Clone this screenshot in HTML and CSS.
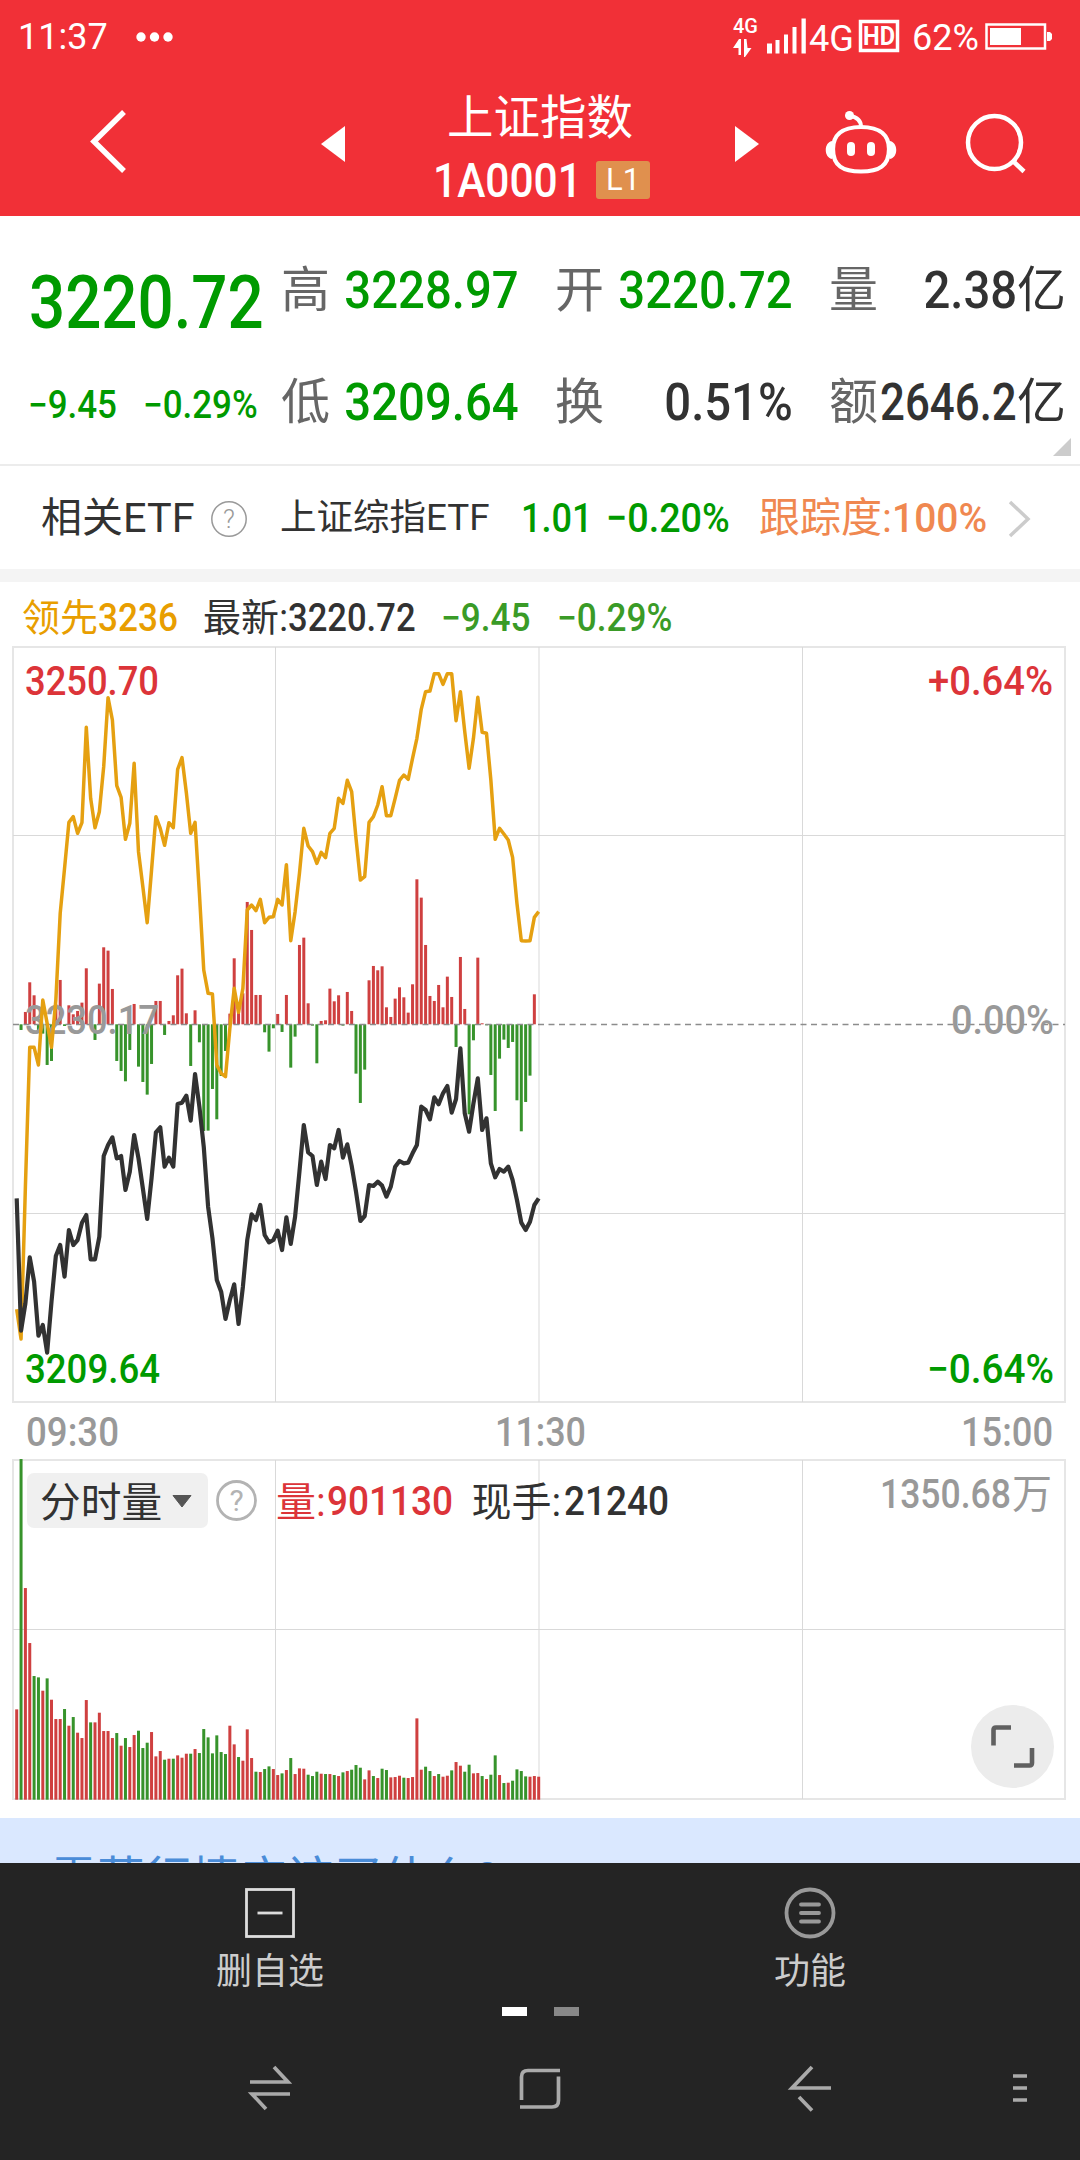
FILE: index.html
```html
<!DOCTYPE html>
<html lang="zh-CN">
<head>
<meta charset="utf-8">
<title>上证指数 1A0001</title>
<link rel="stylesheet" href="styles.css">
</head>
<body>
<div class="screen">
  <header class="top">
    <div class="status">
      <span class="clock">11:37</span>
      <svg class="dots" width="40" height="12" viewBox="0 0 40 12" fill="#fff"><circle cx="6" cy="6" r="4.7"/><circle cx="19.5" cy="6" r="4.7"/><circle cx="33" cy="6" r="4.7"/></svg>
      <svg class="signals" width="330" height="60" viewBox="730 10 330 60" fill="#fff">
        <text x="733" y="33" font-size="21" font-weight="500" textLength="25" lengthAdjust="spacingAndGlyphs">4G</text>
        <path d="M733 48l6-9h2v16h-2.500v-7zM744 39h2.500l1 9h4l-6.500 9h-1z"/>
        <path d="M767 43.500h5v10h-5zM775.500 40h4v13.500h-4zM784 34.500h4v19h-4zM792.500 27h4v26.500h-4zM801.500 18.500h4.300v35h-4.300z"/>
        <text x="809" y="51" font-size="36" textLength="45" lengthAdjust="spacingAndGlyphs">4G</text>
        <rect x="860.500" y="21.500" width="37" height="29" fill="none" stroke="#fff" stroke-width="3.500"/>
        <text x="863" y="45" font-size="25" font-weight="700" textLength="32" lengthAdjust="spacingAndGlyphs">HD</text>
        <text x="912" y="50" font-size="36" textLength="67" lengthAdjust="spacingAndGlyphs">62%</text>
        <rect x="986.500" y="24.500" width="58.500" height="24" fill="none" stroke="#fff" stroke-width="2.500"/>
        <path d="M990 28h31v17h-31zM1047 32h3l2 2v5l-2 2h-3z"/>
      </svg>
    </div>
    <div class="titlebar">
      <svg class="back" width="40" height="66" viewBox="0 0 40 66"><path d="M36 4L6 33.500 36 63" fill="none" stroke="#fff" stroke-width="5.500"/></svg>
      <svg class="prev" width="24" height="38" viewBox="0 0 24 38" fill="#fff"><path d="M0 19L24 1v36z"/></svg>
      <div class="name">
        <h1>上证指数</h1>
        <div class="code"><span class="num">1A0001</span><span class="level">L1</span></div>
      </div>
      <svg class="next" width="24" height="38" viewBox="0 0 24 38" fill="#fff"><path d="M24 19L0 1v36z"/></svg>
      <svg class="robot" width="72" height="66" viewBox="825 110 72 66">
        <path d="M861 127c20 0 28 9 28 22 0 17-10 22.500-28 22.500s-28-5.500-28-22.500c0-13 8-22 28-22z" fill="none" stroke="#fff" stroke-width="4.200"/>
        <path d="M832.500 141c-9 1-9 17 0 18zM889.500 141c9 1 9 17 0 18z" fill="#fff"/>
        <path d="M861 127c0-7-4-10-11-11" fill="none" stroke="#fff" stroke-width="4"/>
        <circle cx="849.500" cy="115.500" r="4.500" fill="#fff"/>
        <rect x="847" y="142" width="8" height="14" rx="4" fill="#fff"/><rect x="867" y="142" width="8" height="14" rx="4" fill="#fff"/>
      </svg>
      <svg class="search" width="64" height="64" viewBox="964 112 64 64" fill="none" stroke="#fff" stroke-width="4.500"><circle cx="994.500" cy="142.500" r="26.500"/><path d="M1013 161l11 10.500"/></svg>
    </div>
  </header>

  <section class="quote">
    <span class="big num down">3220.72</span>
    <div class="cell"><span class="label">高</span><span class="num down">3228.97</span></div>
    <div class="cell"><span class="label">开</span><span class="num down">3220.72</span></div>
    <div class="cell"><span class="label">量</span><span class="mixed"><span class="num">2.38</span><span class="unit">亿</span></span></div>
    <div class="change down"><span class="num c1">−9.45</span><span class="num c2">−0.29%</span></div>
    <div class="cell"><span class="label">低</span><span class="num down">3209.64</span></div>
    <div class="cell"><span class="label">换</span><span class="num">0.51%</span></div>
    <div class="cell"><span class="label">额</span><span class="mixed"><span class="num tight">2646.2</span><span class="unit">亿</span></span></div>
    <i class="corner"></i>
  </section>

  <section class="etf">
    <span class="etf-label">相关<span class="latin">ETF</span></span>
    <svg class="help" width="38" height="38" viewBox="0 0 38 38"><circle cx="19" cy="19" r="17.200" fill="none" stroke="#999" stroke-width="1.500"/><text x="19" y="28" font-size="26" fill="#999" text-anchor="middle" font-weight="300">?</text></svg>
    <span class="etf-name">上证综指<span class="latin">ETF</span></span>
    <span class="num down p">1.01</span>
    <span class="num down r">−0.20%</span>
    <span class="track">跟踪度:<span class="num">100%</span></span>
    <svg class="go" width="26" height="40" viewBox="0 0 26 40"><path d="M3 3l18 17L3 37" fill="none" stroke="#ccc" stroke-width="3.500"/></svg>
  </section>

  <section class="legend">
    <span class="lead">领先<span class="num">3236</span></span>
    <span class="last">最新:<span class="num">3220.72</span></span>
    <span class="num fall l1">−9.45</span>
    <span class="num fall">−0.29%</span>
  </section>

  <svg class="chart" id="chart" width="1080" height="1172" viewBox="0 646 1080 1172">
    <g id="grid" fill="none" stroke="#d9d9d9"></g>
    <g id="bars"></g>
    <path id="zero" d="M13 1024.500H1065" stroke="#8c8c8c" stroke-width="1.500" stroke-dasharray="6 4.500"/>
    <g class="axis">
      <text class="dim" x="25" y="1034" textLength="134" lengthAdjust="spacingAndGlyphs">3230.17</text>
      <text class="dim" x="951" y="1034" textLength="103" lengthAdjust="spacingAndGlyphs">0.00%</text>
    </g>
    <g id="lines" fill="none" stroke-linejoin="round"></g>
    <g class="axis">
      <text class="up" x="25" y="695" textLength="134" lengthAdjust="spacingAndGlyphs">3250.70</text>
      <text class="up" x="928" y="695" textLength="125" lengthAdjust="spacingAndGlyphs">+0.64%</text>
      <text class="dn" x="25" y="1383" textLength="135" lengthAdjust="spacingAndGlyphs">3209.64</text>
      <text class="dn" x="927" y="1383" textLength="127" lengthAdjust="spacingAndGlyphs">−0.64%</text>
      <text class="dim" x="26" y="1446" textLength="93" lengthAdjust="spacingAndGlyphs">09:30</text>
      <text class="dim" x="495" y="1446" textLength="91" lengthAdjust="spacingAndGlyphs">11:30</text>
      <text class="dim" x="961" y="1446" textLength="92" lengthAdjust="spacingAndGlyphs">15:00</text>
    </g>
    <rect x="27" y="1473" width="181" height="55" rx="7" fill="#f0f0f0"/>
    <text class="cjk chip" x="40" y="1516.500" fill="#323232">分时量</text>
    <path d="M173 1495.500h18l-9 11.500z" fill="#555" stroke="#555" stroke-linejoin="round"/>
    <circle cx="236.500" cy="1500.500" r="19" fill="none" stroke="#b3b3b3" stroke-width="2.800"/>
    <text class="q" x="236.500" y="1511" text-anchor="middle">?</text>
    <g class="axis">
      <text class="cjk up" x="276" y="1515.500">量:</text>
      <text class="up" x="327" y="1515" textLength="126" lengthAdjust="spacingAndGlyphs">901130</text>
      <text class="cjk" x="471.500" y="1515.500" fill="#323232">现手:</text>
      <text x="564" y="1515" fill="#323232" textLength="105" lengthAdjust="spacingAndGlyphs">21240</text>
      <text class="dim" x="880" y="1508" textLength="131" lengthAdjust="spacingAndGlyphs">1350.68</text>
      <text class="cjk dim" x="1012" y="1508">万</text>
    </g>
    <circle cx="1012.500" cy="1746.500" r="41.500" fill="#ececec"/>
    <path d="M993.500 1745.500v-15.500q0-2.500 2.500-2.500h15M1014 1765.500h15.500q2.500 0 2.500-2.500v-15" fill="none" stroke="#606060" stroke-width="4.600"/>
  </svg>

  <section class="banner">震荡行情应该买什么?</section>

  <footer class="bottom">
    <nav class="actions">
      <div class="action">
        <svg width="52" height="52" viewBox="0 0 52 52" fill="none" stroke="#ddd" stroke-width="2.800"><rect x="2.500" y="2.500" width="47" height="47"/><path d="M13.500 26h25"/></svg>
        <span>删自选</span>
      </div>
      <div class="action">
        <svg width="52" height="52" viewBox="0 0 52 52" fill="none" stroke="#999" stroke-width="3.800"><circle cx="26" cy="26" r="23.500"/><path d="M17 17.500h18M17 26h18M17 34.500h18" stroke-linecap="round"/></svg>
        <span>功能</span>
      </div>
    </nav>
    <div class="pager"><i class="on"></i><i></i></div>
    <svg class="sysnav" width="1080" height="60" viewBox="0 2058 1080 60" fill="none" stroke="#aaa" stroke-width="3.700">
      <path d="M250 2082h38L274 2067M290 2094h-38l14 15"/>
      <path d="M560 2070.500h-32q-6.500 0-6.500 6.500v23M520 2107h32q6.500 0 6.500-6.500v-24"/>
      <path d="M831 2088h-39l20-21M799 2097l13 13.500"/>
      <path d="M1013 2076h14M1013 2088h14M1013 2100h14"/>
    </svg>
  </footer>
</div>
<script src="chart.js"></script>
</body>
</html>
```
FILE: styles.css
```css
* { box-sizing: border-box; }
body { margin: 0; background: #fff; font-family: Roboto, "Noto Sans CJK SC", sans-serif; color: #323232; }
.screen { width: 1080px; height: 2160px; overflow: hidden; display: flex; flex-direction: column; line-height: 1; white-space: nowrap; }
svg { display: block; flex: none; }
.num { font-family: Roboto, sans-serif; font-weight: 500; display: inline-block; transform: scaleX(.9); transform-origin: left center; }
.down { color: #009a00; }

.top { height: 216px; background: #f13037; color: #fff; flex: none; }
.status { height: 74px; display: flex; align-items: center; padding-left: 18px; }
.clock { font-size: 36px; width: 117px; }
.signals { margin-left: 555px; margin-top: 6px; }
.titlebar { height: 142px; display: flex; align-items: flex-start; }
.back { margin: 34px 0 0 88px; }
.prev { margin: 51px 0 0 193px; }
.name { width: 390px; padding-left: 102px; }
.name h1 { margin: 21px 0 0; font-size: 46.500px; line-height: 46px; font-weight: 400; }
.code { display: flex; align-items: center; height: 38px; margin: 20px 0 0 -14px; font-size: 48px; }
.code .num { width: 163px; padding-top: 1px; transform: scaleX(.885); }
.level { width: 54px; height: 38px; border-radius: 3px; background: #e0904e; font-size: 31px; line-height: 38px; text-align: center; }
.next { margin-top: 51px; }
.robot { margin: 36px 0 0 66px; }
.search { margin: 38px 0 0 67px; }

.quote { position: relative; height: 250px; flex: none; padding: 18px 0 0 28px; display: grid; grid-template-columns: 253px 274px 274px 239px; grid-template-rows: 112px 112px; align-items: center; border-bottom: 2px solid #ececec; }
.big { font-size: 74px; padding-top: 25px; transform: translateX(1px) scaleX(.86); }
.cell { display: flex; justify-content: space-between; align-items: center; padding-right: 36px; font-size: 52.500px; }
.cell .num { padding-top: 1px; transform-origin: right center; }
.cell:nth-child(4n) { padding-right: 0; width: 237px; }
.label, .unit { font-size: 49px; }
.label { color: #666; margin-right: -12px; }
.mixed { display: flex; align-items: center; }
.cell .num.tight { transform: scaleX(.835); margin-left: -24px; }
.change { display: flex; font-size: 38px; padding-top: 6px; }
.c1 { width: 115px; transform: scaleX(.92); }
.c2 { transform: scaleX(.92); }
.corner { position: absolute; right: 9px; bottom: 8px; width: 18px; height: 18px; background: #ccc; clip-path: polygon(100% 0, 100% 100%, 0 100%); }

.etf { height: 103px; flex: none; display: flex; align-items: center; padding: 2px 0 0 41px; }
.latin { display: inline-block; transform: scaleX(1.01); transform-origin: left; }
.etf-label { font-size: 41px; width: 169px; }
.etf-name { font-size: 36.500px; width: 241px; margin-left: 32px; }
.etf .num { font-size: 41px; transform: scaleX(.92); }
.etf .p { width: 85px; transform: scaleX(.88); }
.r { width: 153px; }
.track { color: #f08850; font-size: 41px; width: 250px; }
.etf .track .num { transform: scaleX(.95); }
.go { margin-left: -2px; }

.legend { height: 77px; flex: none; border-top: 13px solid #f4f4f4; padding: 7px 0 0 22px; display: flex; align-items: center; font-size: 38px; }
.legend .num { transform: scaleX(.925); }
.lead { color: #e89e00; width: 181px; }
.last { width: 238px; }
.last .num { transform: scaleX(.91); }
.fall { color: #3a9b27; }
.l1 { width: 116px; }

.chart text { font-family: Roboto, "Noto Sans CJK SC", sans-serif; }
.axis text { font-size: 40px; font-weight: 500; }
.chart text.cjk { font-size: 40px; font-weight: 400; }
.chart text.chip { font-size: 40.700px; }
.up { fill: #dc3439; }
.dn { fill: #009a00; }
.dim { fill: #999; }
.q { font-size: 30px; fill: #b3b3b3; }

.banner { height: 45px; flex: none; background: #dae8ff; color: #4a8cd8; font-size: 47.300px; line-height: 47px; padding: 39px 0 0 50px; overflow: hidden; }

.bottom { flex: 1; background: #242424; }
.actions { display: flex; padding-top: 24px; }
.action { width: 540px; display: flex; flex-direction: column; align-items: center; color: #ccc; font-size: 36px; gap: 15px; }
.pager { display: flex; justify-content: center; gap: 27px; margin-top: 17px; }
.pager i { width: 25px; height: 9px; background: #888; }
.pager .on { background: #fff; }
.sysnav { margin-top: 42px; }
```
FILE: chart.js
```js
// Series are one sample per minute; y values are thirds of a pixel.
const X0 = 16.7, STEP = 4.35, UP = '#cf4040', DOWN = '#37932b';

const lead = [2008,2097,1640,1222,1222,1275,1080,1150,1222,1080,820,685,547,530,580,548,262,475,563,515,380,173,240,437,472,598,550,370,635,740,848,690,530,565,616,548,563,388,353,458,580,547,760,990,1060,1062,1275,1300,1310,1165,1045,1117,1045,810,795,812,778,848,832,830,778,795,674,902,815,700,565,618,635,670,637,653,580,565,475,490,421,455,595,720,710,547,530,495,440,527,527,475,421,405,418,355,295,208,155,153,101,101,133,101,101,242,155,275,385,295,172,277,280,420,598,565,582,600,652,790,902,903,902,832,815];
const price = [535,932,850,712,785,947,915,998,845,708,675,770,630,675,660,608,585,718,718,650,408,375,352,415,408,510,455,345,415,505,597,475,337,322,440,413,440,252,248,227,302,162,260,380,560,655,780,815,897,840,793,912,800,660,583,600,555,645,667,660,632,690,592,672,590,455,315,397,408,495,425,477,375,385,330,413,373,437,515,603,588,495,498,485,497,530,500,440,423,430,428,400,375,260,270,298,232,253,220,198,278,237,85,280,335,250,175,330,295,430,472,447,455,440,480,540,608,630,605,555,535];
const force = [0,-17,37,126,87,-25,-28,-122,-110,60,133,-5,57,30,40,65,168,18,-47,122,231,221,106,-110,-140,-171,-77,61,-127,-173,-211,-119,70,70,-32,10,27,147,167,33,-125,42,-54,-320,-319,-194,-285,-155,-80,32,198,35,93,367,283,88,88,-24,-82,-12,31,-23,88,-130,-37,238,260,63,-4,-117,10,12,107,69,87,-4,97,40,-148,-236,-136,132,175,162,174,51,22,77,111,81,35,120,435,380,238,85,70,118,51,143,82,-68,202,46,-270,-48,200,3,-3,-152,-260,-103,-46,-71,-53,-228,-321,-233,-154,90,0];
const volume = [271,-1022,635,470,-371,-367,327,-364,300,242,242,-272,222,-248,201,185,299,-232,232,261,206,206,185,-200,162,-185,158,194,-207,-155,-171,203,130,146,-120,123,-123,133,126,138,-138,152,-140,-212,-187,-139,-193,-143,-137,222,166,-128,117,211,125,-84,83,-92,-100,92,74,-79,89,-125,77,94,93,-75,-71,-84,78,-77,77,-74,71,-82,86,-90,-104,-96,61,88,-71,65,-93,-89,67,68,72,-66,65,68,244,90,-99,-86,71,-77,69,72,-88,113,102,-84,-105,79,80,-71,62,-75,-133,74,-50,51,-57,-91,-86,-70,69,71,69];

const byId = id => document.getElementById(id);
const at = i => X0 + STEP * i;

byId('grid').innerHTML =
  '<path stroke="#e6e6e6" stroke-width="2" d="M12 647H1066M12 1402H1066M13 647V1402M1065 647V1402M12 1460H1066M12 1799H1066M13 1460V1799M1065 1460V1799"/>' +
  '<path stroke-width="1" d="M13 835.5H1065M13 1213.5H1065M275.500 647V1402M539 647V1402M802.500 647V1402M13 1629.500H1065M275.500 1460V1799M539 1460V1799M802.500 1460V1799"/>';

const bar = (i, v, top) =>
  `<rect x="${(at(i) - 1.5).toFixed(2)}" y="${top}" width="3" height="${Math.abs(v) / 3}" fill="${v > 0 ? UP : DOWN}"/>`;

byId('bars').innerHTML =
  force.map((v, i) => bar(i, v, v > 0 ? 1024.3 - v / 3 : 1024.3)).join('') +
  volume.map((v, i) => bar(i, v, 1799.7 - Math.abs(v) / 3)).join('');

const line = (data, top, stroke, width) =>
  `<polyline stroke="${stroke}" stroke-width="${width}" points="${data.map((v, i) => at(i).toFixed(2) + ',' + (top + v / 3).toFixed(2)).join(' ')}"/>`;

byId('lines').innerHTML = line(lead, 640, '#e5a011', 3.5) + line(price, 1020, '#323232', 4.2);
```
